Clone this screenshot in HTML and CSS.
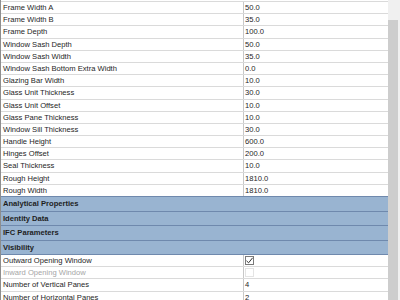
FILE: index.html
```html
<!DOCTYPE html>
<html lang="en">
<head>
    <meta charset="UTF-8">
    <title>Type Properties</title>
    <link rel="stylesheet" href="styles.css">
</head>
<body>

    <div class="panel">
        <div class="grid">
            <div class="row"><span class="name">Frame Width A</span><span class="value">50.0</span></div>
            <div class="row"><span class="name">Frame Width B</span><span class="value">35.0</span></div>
            <div class="row"><span class="name">Frame Depth</span><span class="value">100.0</span></div>
            <div class="row"><span class="name">Window Sash Depth</span><span class="value">50.0</span></div>
            <div class="row"><span class="name">Window Sash Width</span><span class="value">35.0</span></div>
            <div class="row"><span class="name">Window Sash Bottom Extra Width</span><span class="value">0.0</span></div>
            <div class="row"><span class="name">Glazing Bar Width</span><span class="value">10.0</span></div>
            <div class="row"><span class="name">Glass Unit Thickness</span><span class="value">30.0</span></div>
            <div class="row"><span class="name">Glass Unit Offset</span><span class="value">10.0</span></div>
            <div class="row"><span class="name">Glass Pane Thickness</span><span class="value">10.0</span></div>
            <div class="row"><span class="name">Window Sill Thickness</span><span class="value">30.0</span></div>
            <div class="row"><span class="name">Handle Height</span><span class="value">600.0</span></div>
            <div class="row"><span class="name">Hinges Offset</span><span class="value">200.0</span></div>
            <div class="row"><span class="name">Seal Thickness</span><span class="value">10.0</span></div>
            <div class="row"><span class="name">Rough Height</span><span class="value">1810.0</span></div>
            <div class="row"><span class="name">Rough Width</span><span class="value">1810.0</span></div>

            <div class="group">Analytical Properties</div>
            <div class="group">Identity Data</div>
            <div class="group">IFC Parameters</div>
            <div class="group">Visibility</div>

            <div class="row">
                <span class="name">Outward Opening Window</span>
                <span class="value"><span class="check checked">
                    <svg width="9" height="9" viewBox="0 0 9 9"><path d="M1.5 4.8 L3.6 6.8 L7.6 1.8" fill="none" stroke="#333" stroke-width="1"/></svg>
                </span></span>
            </div>
            <div class="row disabled">
                <span class="name">Inward Opening Window</span>
                <span class="value"><span class="check"></span></span>
            </div>
            <div class="row"><span class="name">Number of Vertical Panes</span><span class="value">4</span></div>
            <div class="row"><span class="name">Number of Horizontal Panes</span><span class="value">2</span></div>
        </div>

        <div class="scrollbar">
            <div class="thumb"></div>
        </div>
    </div>

</body>
</html>
```

FILE: styles.css
```css
body {
    margin: 0;
    background: #ffffff;
    font-family: "Liberation Sans", Arial, sans-serif;
    font-size: 7.6px;
    color: #1e1e1e;
}
.panel {
    display: flex;
    height: 300px;
    overflow: hidden;
}
.grid {
    flex: 1;
    padding-top: 1px;
    border-left: 1px solid #8e8e8e;
}
.row {
    display: grid;
    grid-template-columns: 242px 1fr;
    height: 12.2px;
    box-sizing: border-box;
    border-top: 1px solid #dadada;
    line-height: 11px;
}
.name {
    padding-left: 2px;
    white-space: nowrap;
}
.value {
    border-left: 1px solid #c8c8c8;
    padding-left: 1px;
}
.group {
    height: 14.5px;
    box-sizing: border-box;
    background-color: #99b4d1;
    border-top: 1px solid #6f89ad;
    padding-left: 2px;
    line-height: 13.5px;
    font-weight: bold;
}
.group + .row {
    border-top-color: #6f89ad;
}
.disabled .name {
    color: #a6a6a6;
}
.check {
    display: inline-block;
    width: 9px;
    height: 9px;
    margin-top: 1px;
    box-sizing: border-box;
    border: 1px solid #e4e4e4;
    vertical-align: top;
}
.check.checked {
    border-color: #7a7a7a;
}
.check svg {
    display: block;
    margin: -1px;
}
.scrollbar {
    width: 12px;
    background-color: #f0f0f0;
    padding-top: 20px;
    box-sizing: border-box;
}
.thumb {
    width: 10px;
    height: 300px;
    background-color: #cdcdcd;
}
```
